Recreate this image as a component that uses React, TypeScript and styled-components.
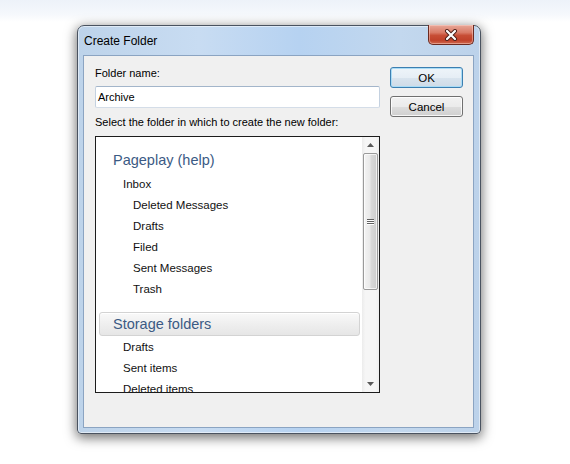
import React from 'react';
import styled, { createGlobalStyle } from 'styled-components';

const GlobalStyle = createGlobalStyle`
  html, body {
    margin: 0;
    padding: 0;
  }
  body {
    background: linear-gradient(#edf2f9 0px, #f5f8fc 14px, #ffffff 22px) no-repeat, #ffffff;
    font-family: "Liberation Sans", Arial, sans-serif;
  }
`;

const Page = styled.div`
  width: 570px;
  height: 464px;
  box-sizing: border-box;
  padding: 25px 0 0 77px;
`;

const Window = styled.div`
  width: 404px;
  height: 409px;
  box-sizing: border-box;
  display: flex;
  flex-direction: column;
  padding: 0 6px 5px 5px;
  border: 1px solid #4a5360;
  border-radius: 7px 7px 4px 4px;
  background: linear-gradient(90deg, #bdd3ea 0%, #c8dcf2 30%, #b6d2f1 55%, #c3d8ee 80%, #bcd2ea 100%);
  box-shadow: 0 3px 12px 1px rgba(0, 0, 0, 0.55), inset 0 0 0 1px rgba(255, 255, 255, 0.5);
`;

const TitleBar = styled.div`
  height: 29px;
  display: flex;
  align-items: flex-start;
  flex-shrink: 0;
`;

const Title = styled.span`
  align-self: center;
  margin: 1px 0 0 1px;
  font-size: 12px;
  color: #000;
`;

const CloseButton = styled.div`
  margin: -1px 0 0 auto;
  width: 46px;
  height: 20px;
  box-sizing: border-box;
  display: flex;
  align-items: center;
  justify-content: center;
  border: 1px solid #6b2a20;
  border-top: none;
  border-radius: 0 0 5px 5px;
  background: linear-gradient(#e8a899 0%, #d97a66 40%, #c74d35 55%, #c0412a 80%, #d06a4f 100%);
  box-shadow: inset 0 0 0 1px rgba(255, 220, 210, 0.45);
`;

const Client = styled.div`
  flex: 1;
  box-sizing: border-box;
  background: #f0f0f0;
  border: 1px solid #8ba4c2;
  padding: 10px 0 0 11px;
  display: grid;
  grid-template-columns: 285px 73px;
  column-gap: 10px;
  align-items: start;
`;

const LeftColumn = styled.div`
  display: flex;
  flex-direction: column;
`;

const Label = styled.div<{ $gap?: number }>`
  margin-top: ${(p) => p.$gap ?? 0}px;
  height: 14px;
  line-height: 14px;
  font-size: 11px;
  color: #000;
  white-space: nowrap;
`;

const NameInput = styled.div`
  margin-top: 6px;
  height: 22px;
  box-sizing: border-box;
  padding-left: 2px;
  line-height: 20px;
  font-size: 11px;
  color: #000;
  background: #fff;
  border: 1px solid;
  border-color: #a3b5ca #c4d1e0 #d4dde8 #c4d1e0;
  border-radius: 2px;
`;

const ListBox = styled.div`
  margin-top: 7px;
  height: 257px;
  box-sizing: border-box;
  border: 1px solid #1c1c1c;
  background: #fff;
  display: flex;
`;

const ListContent = styled.div`
  flex: 1;
  overflow: hidden;
  padding: 11px 2px 0 3px;
`;

const SectionHeader = styled.div<{ $highlight?: boolean; $gap?: number }>`
  margin-top: ${(p) => p.$gap ?? 0}px;
  height: ${(p) => (p.$highlight ? 24 : 25)}px;
  box-sizing: border-box;
  padding-left: 13px;
  line-height: 22px;
  font-size: 14.5px;
  color: #3b5a84;
  white-space: nowrap;
  border: 1px solid ${(p) => (p.$highlight ? '#d3d3d3' : 'transparent')};
  border-radius: 3px;
  background: ${(p) => (p.$highlight ? 'linear-gradient(#f9f9f9, #ededed 60%, #e6e6e6)' : 'transparent')};
  box-shadow: ${(p) => (p.$highlight ? 'inset 0 1px 0 #ffffff' : 'none')};
`;

const FolderItem = styled.div<{ $level: number }>`
  height: 21px;
  line-height: 23px;
  padding-left: ${(p) => 14 + p.$level * 10}px;
  font-size: 11.5px;
  color: #111;
  white-space: nowrap;
`;

const ScrollBar = styled.div`
  width: 17px;
  flex-shrink: 0;
  display: flex;
  flex-direction: column;
  background: linear-gradient(90deg, #ececec, #f6f6f6 20%, #f6f6f6 80%, #efefef);
`;

const ArrowButton = styled.div`
  height: 16px;
  display: flex;
  align-items: center;
  justify-content: center;
`;

const Track = styled.div`
  flex: 1;
  padding: 0 1px;
`;

const Thumb = styled.div`
  height: 137px;
  box-sizing: border-box;
  border: 1px solid #9a9a9a;
  border-radius: 2px;
  background: linear-gradient(90deg, #f4f4f4, #e9e9e9 45%, #d9d9d9 55%, #cdcdcd);
  box-shadow: inset 0 0 0 1px rgba(255, 255, 255, 0.7);
  display: flex;
  align-items: center;
  justify-content: center;
`;

const Gripper = styled.div`
  width: 7px;
  display: flex;
  flex-direction: column;
  gap: 1px;
  & > span {
    height: 1px;
    background: #5f5f5f;
    box-shadow: 0 1px 0 #ffffff;
  }
`;

const RightColumn = styled.div`
  margin-top: 1px;
  display: flex;
  flex-direction: column;
  gap: 8px;
`;

const Button = styled.div<{ $default?: boolean }>`
  height: 21px;
  box-sizing: border-box;
  display: flex;
  align-items: center;
  justify-content: center;
  font-size: 11.5px;
  color: #000;
  border: 1px solid ${(p) => (p.$default ? '#3c7fb1' : '#707070')};
  border-radius: 3px;
  background: ${(p) =>
    p.$default
      ? 'linear-gradient(#eef4f9 0%, #e6eef5 50%, #d9e4ee 51%, #cfdbe7 100%)'
      : 'linear-gradient(#f2f2f2 0%, #ebebeb 50%, #dddddd 51%, #cfcfcf 100%)'};
  box-shadow: inset 0 0 0 1px ${(p) => (p.$default ? '#a9dcf6' : 'rgba(255, 255, 255, 0.8)')};
`;

const Arrow = ({ down }: { down?: boolean }) => (
  <svg width="7" height="4" viewBox="0 0 7 4">
    <path d={down ? 'M0 0 H7 L3.5 4 Z' : 'M0 4 H7 L3.5 0 Z'} fill="#5a5a5a" />
  </svg>
);

const CloseGlyph = () => (
  <svg width="14" height="12" viewBox="0 0 14 12">
    <path d="M3 2 L11 10 M11 2 L3 10" stroke="#4a1e18" strokeWidth="4" strokeLinecap="round" />
    <path d="M3 2 L11 10 M11 2 L3 10" stroke="#ffffff" strokeWidth="2.2" strokeLinecap="round" />
  </svg>
);

const accountFolders = [
  { name: 'Inbox', level: 1 },
  { name: 'Deleted Messages', level: 2 },
  { name: 'Drafts', level: 2 },
  { name: 'Filed', level: 2 },
  { name: 'Sent Messages', level: 2 },
  { name: 'Trash', level: 2 },
];

const storageFolders = ['Drafts', 'Sent items', 'Deleted items'];

export default function App() {
  return (
    <>
      <GlobalStyle />
      <Page>
        <Window>
          <TitleBar>
            <Title>Create Folder</Title>
            <CloseButton>
              <CloseGlyph />
            </CloseButton>
          </TitleBar>
          <Client>
            <LeftColumn>
              <Label>Folder name:</Label>
              <NameInput>Archive</NameInput>
              <Label $gap={7}>Select the folder in which to create the new folder:</Label>
              <ListBox>
                <ListContent>
                  <SectionHeader>Pageplay (help)</SectionHeader>
                  {accountFolders.map((f) => (
                    <FolderItem key={f.name} $level={f.level}>
                      {f.name}
                    </FolderItem>
                  ))}
                  <SectionHeader $highlight $gap={13}>
                    Storage folders
                  </SectionHeader>
                  {storageFolders.map((name) => (
                    <FolderItem key={name} $level={1}>
                      {name}
                    </FolderItem>
                  ))}
                </ListContent>
                <ScrollBar>
                  <ArrowButton>
                    <Arrow />
                  </ArrowButton>
                  <Track>
                    <Thumb>
                      <Gripper>
                        <span />
                        <span />
                        <span />
                      </Gripper>
                    </Thumb>
                  </Track>
                  <ArrowButton>
                    <Arrow down />
                  </ArrowButton>
                </ScrollBar>
              </ListBox>
            </LeftColumn>
            <RightColumn>
              <Button $default>OK</Button>
              <Button>Cancel</Button>
            </RightColumn>
          </Client>
        </Window>
      </Page>
    </>
  );
}
